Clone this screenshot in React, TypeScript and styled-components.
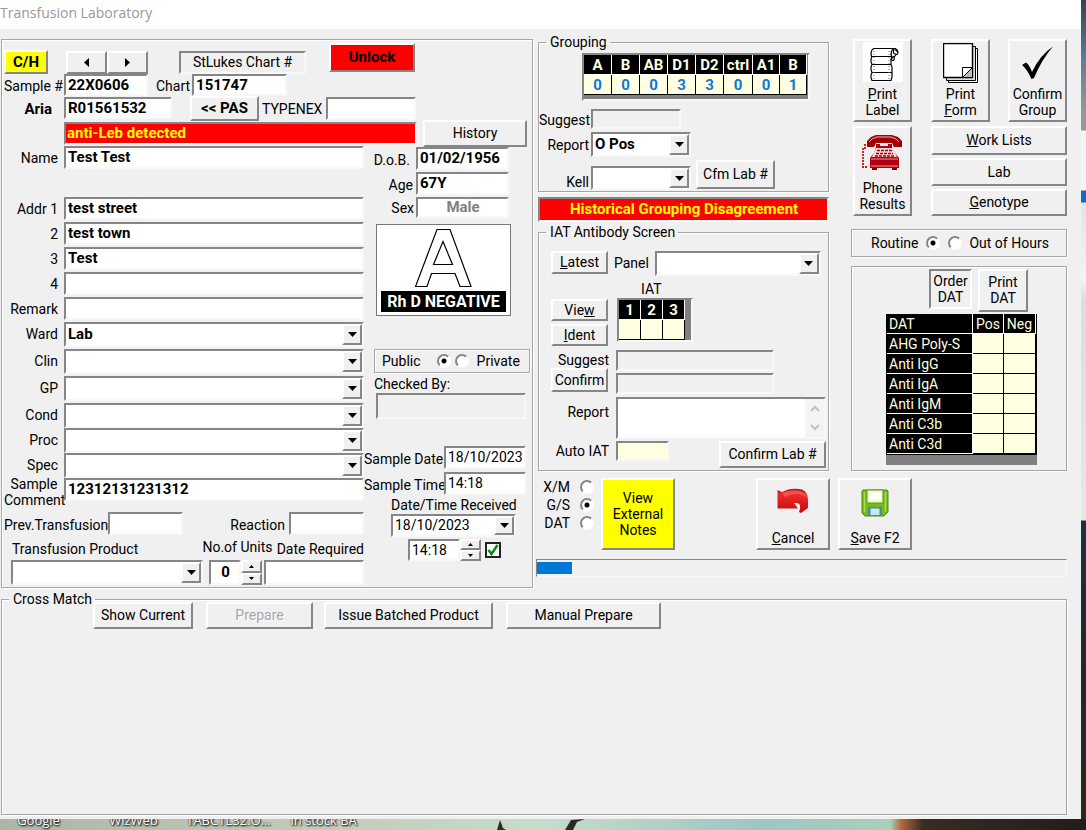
import React from "react";
import styled, { createGlobalStyle, css } from "styled-components";

const GlobalStyle = createGlobalStyle`
  *, *::before, *::after { box-sizing: border-box; }
  body {
    margin: 0;
    background: #2a2623;
    color: #000;
    font-family: Roboto, "Liberation Sans", sans-serif;
    font-size: 14px;
    line-height: 16px;
  }
  button, input, select, textarea { font: inherit; color: inherit; margin: 0; border-radius: 0; }
`;

const raised = css`
  border: 2px solid;
  border-color: #fff #868686 #868686 #fff;
  background: #f0f0f0;
`;

const sunken = css`
  border: 2px solid;
  border-color: #868686 #f8f8f8 #f8f8f8 #868686;
`;

const etched = css`
  border: 1px solid #a6a6a6;
  box-shadow: 1px 1px 0 #fff, inset 1px 1px 0 #fff;
`;

/* ---------- desktop and window ---------- */

const Desktop = styled.div`
  min-height: 100vh;
  display: flex;
  flex-direction: column;
  background: linear-gradient(
    to bottom,
    #2f4558 0, #5d7d97 60px, #8b9aa0 110px, #9a978c 130px, #f4f4f4 131px, #f4f4f4 190px,
    #0a6cd0 191px, #0a6cd0 202px, #e4e4e4 203px, #f4f4f4 280px, #dcdcdc 300px, #e8e8e8 520px,
    #16324a 521px, #22282c 640px, #2a2623 100%
  );
`;

const Window = styled.main`
  flex: 1;
  display: flex;
  flex-direction: column;
  margin-right: 5px;
  background: #f0f0f0;
`;

const TitleBar = styled.header`
  height: 29px;
  padding-top: 5px;
  background: #fff;
  color: #999;
  font-family: "Open Sans", "Noto Sans", sans-serif;
`;

const Title = styled.h1`
  margin: 0;
  font-size: 14px;
  font-weight: 400;
  line-height: 16px;
`;

const Body = styled.div`
  flex: 1;
  display: flex;
  flex-direction: column;
  padding: 10px 14px 4px 1px;
`;

const Columns = styled.div`
  display: grid;
  grid-template-columns: 532fr 531fr;
  gap: 3px;
`;

const Taskbar = styled.footer`
  height: 11px;
  overflow: hidden;
  display: flex;
  align-items: flex-end;
  justify-content: space-between;
  background: linear-gradient(
    to right,
    #aeb4a6 0, #c3ccba 30%, #c6dccb 50%, #9fc5c3 70%, #a9cfbd 82%, #b4673a 83%, #3a2b24 85%, #211d1c 100%
  );
`;

const IconNames = styled.div`
  display: flex;
  margin-left: -9px;
  padding-bottom: 2px;
`;

const IconName = styled.span`
  width: 95px;
  text-align: center;
  white-space: nowrap;
  color: #fff;
  font: 13px/16px "Open Sans", "Noto Sans", sans-serif;
  text-shadow: 1px 1px 2px #000, 0 0 2px #000;
`;

const Masts = styled.svg`
  width: 100px;
  height: 11px;
  flex: none;
  margin-left: 126px;
  margin-right: auto;
`;

/* ---------- shared controls ---------- */

const Row = styled.div<{ $h?: number; $mt?: number; $align?: string; $gap?: number }>`
  display: flex;
  align-items: ${(p) => p.$align ?? "center"};
  gap: ${(p) => p.$gap ?? 0}px;
  margin-top: ${(p) => p.$mt ?? 0}px;
  ${(p) => p.$h && `height: ${p.$h}px;`}
`;

const Stack = styled.div<{ $gap?: number }>`
  display: flex;
  flex-direction: column;
  gap: ${(p) => p.$gap ?? 0}px;
`;

const Label = styled.label<{ $w?: number; $ml?: number; $bold?: boolean }>`
  flex: none;
  ${(p) => p.$w && `width: ${p.$w}px; text-align: right;`}
  margin-left: ${(p) => p.$ml ?? 0}px;
  padding-top: 2px;
  white-space: nowrap;
  ${(p) => p.$bold && "font-weight: 700; font-size: 15px;"}
`;

const LabelText = styled.span`
  display: block;
  padding-top: 2px;
`;

const TextBox = styled.input<{ $w?: number; $ml?: number; $h?: number; $tone?: string; $bold?: boolean }>`
  ${sunken}
  ${(p) => (p.$w ? `width: ${p.$w}px; flex: none;` : "flex: 1; min-width: 0; width: 100%;")}
  height: ${(p) => p.$h ?? 23}px;
  margin-left: ${(p) => p.$ml ?? 0}px;
  padding: 0 1px 1px 2px;
  background: ${(p) => p.$tone ?? "#fff"};
  ${(p) => p.$bold && "font-weight: 700; font-size: 15px;"}
  outline: none;
`;

const SexBox = styled(TextBox)`
  text-align: center;
  color: #808080;
`;

const UnitsBox = styled(TextBox)`
  text-align: center;
`;

const Button = styled.button<{ $w?: number; $h?: number; $ml?: number }>`
  ${raised}
  ${(p) => (p.$w ? `width: ${p.$w}px; flex: none;` : "width: 100%;")}
  height: ${(p) => p.$h ?? 27}px;
  margin-left: ${(p) => p.$ml ?? 0}px;
  padding: 0 0 1px;
  white-space: nowrap;
  line-height: 16px;
  &:disabled { color: #a6a6a6; text-shadow: 1px 1px 0 #fff; }
`;

const ColorButton = styled(Button)<{ $bg: string; $bold?: boolean }>`
  background: ${(p) => p.$bg};
  ${(p) => p.$bold && "font-weight: 700; font-size: 15px;"}
`;

const UnlockButton = styled(ColorButton)`
  align-self: flex-start;
`;

const BoldButton = styled(Button)`
  font-weight: 700;
  font-size: 15px;
`;

const IconButton = styled(Button)<{ $top?: number }>`
  display: flex;
  flex-direction: column;
  align-items: center;
  justify-content: space-between;
  padding: ${(p) => p.$top ?? 2}px 0 2px;
`;

const PressedButton = styled(Button)`
  border-color: #868686 #fff #fff #868686;
`;

const ComboFrame = styled.span<{ $w?: number; $h?: number; $ml?: number }>`
  position: relative;
  display: block;
  ${(p) => (p.$w ? `width: ${p.$w}px; flex: none;` : "flex: 1; min-width: 0;")}
  height: ${(p) => p.$h ?? 25}px;
  margin-left: ${(p) => p.$ml ?? 0}px;
`;

const Select = styled.select<{ $bold?: boolean }>`
  ${sunken}
  appearance: none;
  width: 100%;
  height: 100%;
  padding: 0 22px 1px 2px;
  background: #fff;
  outline: none;
  ${(p) => p.$bold && "font-weight: 700; font-size: 15px;"}
`;

const Arrow = styled.span`
  ${raised}
  position: absolute;
  top: 2px;
  right: 2px;
  bottom: 2px;
  width: 20px;
  display: flex;
  align-items: center;
  justify-content: center;
  pointer-events: none;
`;

function Combo({ id, value = "", bold, ...frame }: {
  id: string; value?: string; bold?: boolean; $w?: number; $h?: number; $ml?: number;
}) {
  return (
    <ComboFrame {...frame}>
      <Select id={id} $bold={bold} defaultValue={value}>
        <option value={value}>{value}</option>
      </Select>
      <Arrow>
        <svg width="9" height="5"><path d="M0 0h9L4.500 5z" /></svg>
      </Arrow>
    </ComboFrame>
  );
}

const Spinner = styled.span<{ $h: number }>`
  display: flex;
  flex-direction: column;
  flex: none;
  width: 21px;
  height: ${(p) => p.$h}px;
`;

const SpinButton = styled.button`
  ${raised}
  flex: 1;
  min-height: 0;
  display: flex;
  align-items: center;
  justify-content: center;
  padding: 0;
`;

function Spin({ h, name }: { h: number; name: string }) {
  return (
    <Spinner $h={h}>
      <SpinButton aria-label={`Increase ${name}`}><svg width="5" height="3"><path d="M0 3h5L2.500 0z" /></svg></SpinButton>
      <SpinButton aria-label={`Decrease ${name}`}><svg width="5" height="3"><path d="M0 0h5L2.500 3z" /></svg></SpinButton>
    </Spinner>
  );
}

const Radio = styled.input`
  appearance: none;
  flex: none;
  width: 14px;
  height: 14px;
  border: 2px solid;
  border-color: #868686 #fff #fff #868686;
  border-radius: 50%;
  background: #fff;
  &:checked { background: radial-gradient(circle, #000 0 2px, #fff 3px); }
`;

const RadioLabel = styled.label<{ $gap: number }>`
  display: flex;
  align-items: center;
  gap: ${(p) => p.$gap}px;
  white-space: nowrap;
`;

const Text = styled.span<{ $w?: number }>`
  ${(p) => p.$w && `width: ${p.$w}px; text-align: right;`}
`;

const Group = styled.fieldset`
  ${etched}
  min-width: 0;
  margin: 0;
  padding: 0;
`;

const Legend = styled.legend`
  height: 6px;
  margin-left: 7px;
  padding: 0 3px 0 4px;
  line-height: 6px;
`;

const Box = styled.section`
  ${etched}
`;

const Alert = styled.div`
  ${sunken}
  height: 23px;
  padding-left: 1px;
  background: #f00;
  color: #ff0;
  font-size: 15px;
  font-weight: 700;
  line-height: 18px;
`;

const AntibodyAlert = styled(Alert)`
  flex: none;
  width: 353px;
  margin-left: 60px;
`;

const GroupAlert = styled(Alert)`
  height: 25px;
  margin-top: 5px;
  line-height: 20px;
  text-align: center;
`;

/* ---------- patient panel ---------- */

const PatientPanel = styled(Box)`
  padding: 3px 2px;
  height: 549px;
`;

const ChartCaption = styled.div`
  ${sunken}
  flex: none;
  width: 127px;
  height: 23px;
  margin-left: 31px;
  line-height: 18px;
  text-align: center;
`;

const PatientGrid = styled.div`
  display: grid;
  grid-template-columns: 360fr 166px;
`;

const CommentLabel = styled.label`
  flex: none;
  width: 60px;
  margin-top: -2px;
  line-height: 16px;
  text-align: center;
`;

const Captions = styled.div`
  display: flex;
  margin: 4px 0 0 8px;
  height: 20px;
  align-items: center;
  justify-content: space-between;
  white-space: nowrap;
`;

const PushedLabel = styled(Label)`
  margin-left: auto;
`;

const UnitsCaption = styled.label`
  margin-left: 60px;
  padding-bottom: 4px;
`;

const BloodCard = styled.figure`
  width: 135px;
  height: 92px;
  margin: 6px 0 0 12px;
  padding: 3px 4px;
  border: 1px solid #777;
  background: #fff;
  display: flex;
  flex-direction: column;
  align-items: center;
  justify-content: space-between;
`;

const RhBar = styled.figcaption`
  width: 100%;
  height: 21px;
  background: #000;
  color: #fff;
  font-size: 16px;
  font-weight: 700;
  line-height: 21px;
  text-align: center;
`;

const AccessBox = styled(Box)`
  display: flex;
  align-items: center;
  gap: 4px;
  height: 24px;
  margin: 33px 0 0 10px;
  padding: 0 7px;
`;

const CheckedBy = styled.div`
  margin: 3px 4px 0 12px;
  height: 43px;
  display: flex;
  flex-direction: column;
  justify-content: space-between;
`;

const CheckedLabel = styled.label`
  margin-left: -2px;
`;

const CheckedBox = styled.input`
  ${sunken}
  width: 100%;
  height: 26px;
  background: #f0f0f0;
`;

const Received = styled.div`
  width: 126px;
  margin-left: 27px;
`;

const Tick = styled.input`
  appearance: none;
  width: 16px;
  height: 16px;
  border: 2px solid #222;
  background: #fff;
`;

const TickFrame = styled.span`
  position: relative;
  display: flex;
  margin-left: 4px;
  svg { position: absolute; inset: 2px; pointer-events: none; }
`;

function LabelRow({ id, label, value, h = 25, combo }: {
  id: string; label: string; value?: string; h?: number; combo?: boolean;
}) {
  return (
    <Row $h={h} $align="flex-start">
      <Label htmlFor={id} $w={54}><LabelText>{label}</LabelText></Label>
      {combo
        ? <Combo id={id} value={value} bold $ml={6} />
        : <TextBox id={id} defaultValue={value} $bold $ml={6} />}
    </Row>
  );
}

function Patient() {
  return (
    <PatientPanel aria-label="Patient">
      <Row $h={31} $align="flex-end">
        <ColorButton $bg="#ff0" $bold $w={44} $h={24}>C/H</ColorButton>
        <Button $w={41} $h={23} $ml={18} aria-label="Previous sample"><svg width="5" height="9"><path d="M5 0v9L0 4.500z" /></svg></Button>
        <Button $w={41} $h={23} aria-label="Next sample"><svg width="5" height="9"><path d="M0 0v9l5-4.500z" /></svg></Button>
        <ChartCaption>StLukes Chart #</ChartCaption>
        <UnlockButton $bg="#f00" $bold $w={86} $h={29} $ml={23}>Unlock</UnlockButton>
      </Row>
      <Row $h={22}>
        <Label htmlFor="sample" $w={57}>Sample #</Label>
        <TextBox id="sample" $bold $w={84} $ml={3} $h={22} defaultValue="22X0606" />
        <Label htmlFor="chart" $ml={8}>Chart</Label>
        <TextBox id="chart" $bold $w={95} $ml={2} $h={22} defaultValue="151747" />
      </Row>
      <Row $h={24}>
        <Label htmlFor="aria" $w={48} $bold>Aria</Label>
        <TextBox id="aria" $bold $w={108} $ml={12} $h={22} defaultValue="R01561532" />
        <BoldButton $w={69} $h={25} $ml={18}>&lt;&lt; PAS</BoldButton>
        <Label htmlFor="typenex" $ml={3}>TYPENEX</Label>
        <TextBox id="typenex" $w={90} $ml={4} />
      </Row>
      <Row $h={26}>
        <AntibodyAlert role="alert">anti-Leb detected</AntibodyAlert>
        <Button $w={104} $ml={6}>History</Button>
      </Row>
      <PatientGrid>
        <div>
          <LabelRow id="name" label="Name" value="Test Test" h={51} />
          <LabelRow id="addr1" label="Addr 1" value="test street" />
          <LabelRow id="addr2" label="2" value="test town" />
          <LabelRow id="addr3" label="3" value="Test" />
          <LabelRow id="addr4" label="4" />
          <LabelRow id="remark" label="Remark" />
          <LabelRow id="ward" label="Ward" value="Lab" h={27} combo />
          <LabelRow id="clin" label="Clin" h={27} combo />
          <LabelRow id="gp" label="GP" h={27} combo />
          <LabelRow id="cond" label="Cond" combo />
          <LabelRow id="proc" label="Proc" combo />
          <LabelRow id="spec" label="Spec" combo />
          <Row $h={32} $align="flex-start">
            <CommentLabel htmlFor="comment">Sample Comment</CommentLabel>
            <TextBox id="comment" $bold defaultValue="12312131231312" />
          </Row>
          <Row $mt={2} $h={23}>
            <Label htmlFor="prev">Prev.Transfusion</Label>
            <TextBox id="prev" $w={75} />
            <PushedLabel htmlFor="reaction">Reaction</PushedLabel>
            <TextBox id="reaction" $w={75} $ml={4} />
          </Row>
          <Captions>
            <label htmlFor="product">Transfusion Product</label>
            <UnitsCaption htmlFor="units">No.of Units</UnitsCaption>
            <label htmlFor="required">Date Required</label>
          </Captions>
          <Row $mt={1} $h={25}>
            <Combo id="product" $w={192} $ml={7} />
            <UnitsBox id="units" $bold $w={32} $ml={6} $h={25} defaultValue="0" />
            <Spin h={25} name="units" />
            <TextBox id="required" $ml={2} $h={25} />
          </Row>
        </div>
        <div>
          <Row $h={25}>
            <Label htmlFor="dob" $w={46}>D.o.B.</Label>
            <TextBox id="dob" $bold $w={93} $ml={6} defaultValue="01/02/1956" />
          </Row>
          <Row $h={25}>
            <Label htmlFor="age" $w={49}>Age</Label>
            <TextBox id="age" $bold $w={93} $ml={3} defaultValue="67Y" />
          </Row>
          <Row $h={22}>
            <Label htmlFor="sex" $w={50}>Sex</Label>
            <SexBox id="sex" $bold $w={93} $ml={2} $h={21} defaultValue="Male" />
          </Row>
          <BloodCard>
            <svg width="58" height="60" viewBox="0 0 58 60" role="img" aria-label="Blood group A">
              <path d="M.5 58.500 22 1.500H35L56 58.500H45L40 45.500H16.500L12 58.500zM18.500 36.500H37.500L28 13.500z" fill="#fff" stroke="#000" strokeWidth="1.200" />
            </svg>
            <RhBar>Rh D NEGATIVE</RhBar>
          </BloodCard>
          <AccessBox>
            <RadioLabel $gap={16}><Text>Public</Text><Radio type="radio" name="access" defaultChecked /></RadioLabel>
            <RadioLabel $gap={8}><Radio type="radio" name="access" /><Text>Private</Text></RadioLabel>
          </AccessBox>
          <CheckedBy>
            <CheckedLabel htmlFor="checked">Checked By:</CheckedLabel>
            <CheckedBox id="checked" />
          </CheckedBy>
          <Row $mt={27} $h={23}>
            <Label htmlFor="sdate" $w={79}>Sample Date</Label>
            <TextBox id="sdate" $w={82} $ml={1} defaultValue="18/10/2023" />
          </Row>
          <Row $mt={3} $h={23}>
            <Label htmlFor="stime" $w={79}>Sample Time</Label>
            <TextBox id="stime" $w={82} $ml={1} defaultValue="14:18" />
          </Row>
          <Received>
            <Row $mt={1} $h={17}><label htmlFor="rdate">Date/Time Received</label></Row>
            <Row $h={25}><Combo id="rdate" value="18/10/2023" $w={125} $h={23} /></Row>
            <Row $h={24}>
              <TextBox id="rtime" aria-label="Time received" $w={52} $h={22} $ml={17} defaultValue="14:18" />
              <Spin h={22} name="time received" />
              <TickFrame>
                <Tick type="checkbox" defaultChecked aria-label="Received" />
                <svg width="12" height="12" viewBox="0 0 12 12"><path d="M1.500 6 4.500 10 10.500 1" fill="none" stroke="#0a8a0a" strokeWidth="2.500" /></svg>
              </TickFrame>
            </Row>
          </Received>
        </div>
      </PatientGrid>
    </PatientPanel>
  );
}

/* ---------- grouping and antibody screen ---------- */

const GridFrame = styled.div<{ $w: number }>`
  ${sunken}
  width: ${(p) => p.$w}px;
  background: #808080;
`;

const GroupingFrame = styled(GridFrame)`
  margin: 8px 0 0 43px;
  padding-bottom: 4px;
`;

const DatFrame = styled.div`
  width: 151px;
  margin-top: 2px;
  padding-bottom: 10px;
  background: #808080;
`;

const Grid = styled.table`
  border-collapse: separate;
  border-spacing: 0;
  table-layout: fixed;
  th, td {
    height: 20px;
    padding: 0;
    text-align: center;
    line-height: 18px;
    font-size: 15px;
    font-weight: 700;
  }
  th {
    background: #000;
    color: #ffffe1;
    border-right: 1px solid #fff;
    border-bottom: 1px solid #fff;
  }
  td {
    background: #ffffe1;
    color: #0a78d7;
    border-right: 1px solid #000;
    border-bottom: 1px solid #000;
  }
`;

const DatGrid = styled(Grid)`
  width: 100%;
  border: 1px solid #000;
  border-top: 0;
  th, td { font-weight: 400; font-size: 14px; }
  th:first-child { text-align: left; padding-left: 2px; }
`;

const GroupingSet = styled(Group)`
  height: 153px;
`;

const CfmButton = styled(Button)`
  align-self: flex-start;
`;

const reactions = [["A", 0], ["B", 0], ["AB", 0], ["D1", 3], ["D2", 3], ["ctrl", 0], ["A1", 0], ["B", 1]];

function Grouping() {
  return (
    <GroupingSet>
      <Legend>Grouping</Legend>
      <GroupingFrame $w={228}>
        <Grid>
          <colgroup>{reactions.map((_, i) => <col key={i} width={i < 5 ? 28 : i === 5 ? 29 : 27} />)}</colgroup>
          <thead><tr>{reactions.map(([name], i) => <th key={i}>{name}</th>)}</tr></thead>
          <tbody><tr>{reactions.map(([, score], i) => <td key={i}>{score}</td>)}</tr></tbody>
        </Grid>
      </GroupingFrame>
      <Row $mt={8} $h={20}>
        <Label htmlFor="gsuggest" $w={50}>Suggest</Label>
        <TextBox id="gsuggest" $w={90} $h={20} $ml={2} $tone="#f0f0f0" />
      </Row>
      <Row $mt={3} $h={24}>
        <Label htmlFor="greport" $w={50}>Report</Label>
        <Combo id="greport" value="O Pos" bold $w={100} $ml={2} />
      </Row>
      <Row $mt={4} $h={30} $align="flex-end">
        <Label htmlFor="kell" $w={50}>Kell</Label>
        <Combo id="kell" $w={100} $h={24} $ml={2} />
        <CfmButton $w={79} $h={29} $ml={5}>Cfm Lab #</CfmButton>
      </Row>
    </GroupingSet>
  );
}

const ScreenSet = styled(Group)`
  height: 242px;
  margin-top: 7px;
`;

const ScreenBody = styled.div`
  padding: 16px 2px 0 12px;
`;

const IatColumn = styled.div`
  margin-left: 9px;
`;

const IatTitle = styled.div`
  height: 17px;
  padding-left: 24px;
`;

const IatButtons = styled(Stack)`
  width: 57px;
  padding-top: 18px;
`;

const SuggestStack = styled(Stack)`
  width: 58px;
  text-align: right;
`;

const ReportLabel = styled.span`
  display: block;
  padding-bottom: 14px;
`;

const ReportArea = styled.div`
  ${sunken}
  flex: 1;
  height: 42px;
  margin-left: 7px;
  display: flex;
  background: #fff;
`;

const ReportText = styled.textarea`
  flex: 1;
  min-width: 0;
  border: 0;
  padding: 2px;
  resize: none;
  outline: none;
  background: none;
`;

const ScrollRail = styled.span`
  width: 19px;
  display: flex;
  flex-direction: column;
  align-items: center;
  justify-content: space-around;
  background: #f4f4f4;
`;

const PushedButton = styled(Button)`
  margin-left: auto;
`;

function Screen() {
  return (
    <ScreenSet>
      <Legend>IAT Antibody Screen</Legend>
      <ScreenBody>
        <Row $h={25} $align="flex-start">
          <Button $w={57} $h={23}><u>L</u>atest</Button>
          <Label htmlFor="panel" $ml={6}><LabelText>Panel</LabelText></Label>
          <Combo id="panel" $w={166} $ml={6} />
        </Row>
        <Row $mt={5} $align="flex-start">
          <IatButtons $gap={3}>
            <Button $h={22}>Vie<u>w</u></Button>
            <Button $h={22}><u>I</u>dent</Button>
          </IatButtons>
          <IatColumn>
            <IatTitle>IAT</IatTitle>
            <GridFrame $w={76}>
              <Grid>
                <colgroup><col width={22} /><col width={22} /><col width={22} /></colgroup>
                <thead><tr><th>1</th><th>2</th><th>3</th></tr></thead>
                <tbody><tr><td /><td /><td /></tr></tbody>
              </Grid>
            </GridFrame>
          </IatColumn>
        </Row>
        <Row $mt={4} $align="flex-start">
          <SuggestStack>
            <Label htmlFor="iatsuggest">Suggest</Label>
            <Button $w={57} $h={24}>Confirm</Button>
          </SuggestStack>
          <Stack $gap={2}>
            <TextBox id="iatsuggest" $w={158} $h={21} $ml={7} $tone="#f0f0f0" />
            <TextBox aria-label="Confirmed antibody" $w={158} $h={21} $ml={7} $tone="#f0f0f0" />
          </Stack>
        </Row>
        <Row $mt={2} $h={43}>
          <Label htmlFor="iatreport" $w={58}><ReportLabel>Report</ReportLabel></Label>
          <ReportArea>
            <ReportText id="iatreport" />
            <ScrollRail>
              <svg width="10" height="7"><path d="M1 6 5 2l4 4" fill="none" stroke="#c0c0c0" strokeWidth="2" /></svg>
              <svg width="10" height="7"><path d="m1 1 4 4 4-4" fill="none" stroke="#c0c0c0" strokeWidth="2" /></svg>
            </ScrollRail>
          </ReportArea>
        </Row>
        <Row $mt={2} $h={26} $align="flex-start">
          <Label htmlFor="autoiat" $w={58}>Auto IAT</Label>
          <TextBox id="autoiat" $w={53} $h={20} $ml={7} $tone="#ffffe1" />
          <PushedButton $w={107}>Confirm Lab #</PushedButton>
        </Row>
      </ScreenBody>
    </ScreenSet>
  );
}

/* ---------- right-hand tools ---------- */

const Upper = styled.div`
  display: grid;
  grid-template-columns: 291fr 216fr;
  gap: 22px;
  padding-left: 2px;
`;

const Tools = styled.div`
  display: flex;
  flex-direction: column;
`;

const ToolGrid = styled.div`
  display: grid;
  grid-template-columns: 59px 1fr;
  gap: 4px 19px;
  margin-left: 2px;
`;

const SpreadRow = styled.div`
  display: flex;
  justify-content: space-between;
`;

const HoursBox = styled(Box)`
  display: flex;
  align-items: center;
  gap: 8px;
  height: 28px;
  margin-top: 13px;
  padding-left: 19px;
`;

const DatBox = styled(Box)`
  height: 205px;
  margin-top: 9px;
  padding: 2px 0 0 34px;
`;

const LabelRollIcon = () => (
  <svg width="40" height="40" viewBox="0 0 40 40">
    <path d="M0 0h40v40H0z" fill="#fff" />
    <g fill="#fff" stroke="#000" strokeWidth="1.200">
      <path d="M10 6.500H32Q36 8 34.500 12 31 13 31 18 29 20 28 15.500V11z" />
      <path d="M11 6.500Q7 8 8.500 14.500H28.500Q27 9 31 6.500z" />
      <path d="M9 14.500H29L28 17V22.500H9L8 20V17zM9 22.500H28L29 25V30.500H9L8 28V25zM9 30.500H29V35L28 38.500H9L8 36V33z" />
      <path d="M31 7Q29 12 33 12M32 7.500 35 10M29 16.500 31 14" fill="none" />
    </g>
    <path d="M11 9v29M26 9v29" stroke="#777" strokeDasharray="1 2" />
  </svg>
);

const FormIcon = () => (
  <svg width="36" height="41" viewBox="0 0 36 41">
    <g fill="#fff" stroke="#000">
      <path d="M5.500 5.500h29v34h-29z" />
      <path d="M3.500 3.500h29v34h-29z" fill="#ddd" />
      <path d="M.5.500h29v34H.5z" strokeWidth="1.400" />
      <path d="M19.500 34.500v-10h10z" />
      <path d="M19.500 34.500 29.500 24.500v10z" fill="#bbb" />
    </g>
  </svg>
);

const CheckIcon = () => (
  <svg width="33" height="34" viewBox="0 0 33 34">
    <path d="M1 19 5 16.500Q8.500 19 11 26 19 9 32 .5 21 13 13 32L10.500 33Q6 23 1 19z" />
  </svg>
);

const PhoneIcon = () => (
  <svg width="42" height="35" viewBox="0 0 42 35">
    <path d="M7 10H3v3h-2v19h4" fill="none" stroke="#c01818" strokeWidth="1.800" strokeDasharray="2 1" />
    <path d="M5 12V6l4-4 5-2h16l6 2 4 4v6h-8l-2-4H14l-2 4z" fill="#a00008" />
    <path d="M7 7l3-3 5-2h14l5 2 3 3" fill="none" stroke="#ffb0b0" />
    <path d="M14 12V9h4v2h8V9h4v3l3 6 4 5v10H8V23l4-5z" fill="#b00010" />
    <path d="M14 13h17l4 9H10z" fill="#ffd8d8" />
    <path d="M15 15.500h15M14 18.500h17M13 21h19" stroke="#a00008" strokeWidth="1.600" strokeDasharray="3 1" />
    <path d="M9 24h27M9 31h27" stroke="#ff8a8a" />
    <path d="M10 33h5v2h-5zM30 33h5v2h-5z" fill="#700" />
  </svg>
);

const UndoIcon = () => (
  <svg width="32" height="27" viewBox="0 0 32 27">
    <defs>
      <linearGradient id="undo" x1="0" y1="0" x2="0" y2="1">
        <stop offset="0" stopColor="#b51212" /><stop offset=".25" stopColor="#f02a2a" /><stop offset="1" stopColor="#c20a0a" />
      </linearGradient>
    </defs>
    <path d="M.5 2 5 4Q14-1 25 1.500 31 4 31 12V20L24 25 22 24Q25 16 20 15H17L21 20.500H.5z" fill="url(#undo)" />
    <path d="M5 5Q14 1 23 3 29 5 30 10 26 6 20 6 13 6 8 9z" fill="#ff7070" opacity=".6" />
  </svg>
);

const DiskIcon = () => (
  <svg width="28" height="28" viewBox="0 0 28 28">
    <path d="M2 1h24l1 1v21l-4 4H4l-3-3V2z" fill="#78b81c" stroke="#4d8a10" />
    <path d="M3.500 3v20M24.500 3v20" stroke="#a8dc50" strokeWidth="1.500" />
    <path d="M6 1h16v13H6z" fill="#eef8d0" stroke="#5f9a14" />
    <path d="M8 3h12v8H8z" fill="#fcfff0" />
    <path d="M7 18h14v9H7z" fill="#458e9c" />
    <path d="M9.500 19.500h9v6.500h-9z" fill="#c4e8f4" />
  </svg>
);

const datRows = ["AHG Poly-S", "Anti IgG", "Anti IgA", "Anti IgM", "Anti C3b", "Anti C3d"];

function ToolColumn() {
  return (
    <Tools>
      <ToolGrid>
        <IconButton $h={83} $top={1}><LabelRollIcon /><span><u>P</u>rint<br />Label</span></IconButton>
        <SpreadRow>
          <IconButton $w={59} $h={83}><FormIcon /><span>Print<br /><u>F</u>orm</span></IconButton>
          <IconButton $w={59} $h={83} $top={5}><CheckIcon /><span>Confirm<br />Group</span></IconButton>
        </SpreadRow>
        <IconButton $h={90} $top={7}><PhoneIcon /><span>Phone<br />Results</span></IconButton>
        <Stack $gap={3}>
          <Button $h={29}><u>W</u>ork Lists</Button>
          <Button $h={28}>Lab</Button>
          <Button $h={27}><u>G</u>enotype</Button>
        </Stack>
      </ToolGrid>
      <HoursBox>
        <RadioLabel $gap={8}><Text>Routine</Text><Radio type="radio" name="hours" defaultChecked /></RadioLabel>
        <RadioLabel $gap={7}><Radio type="radio" name="hours" /><Text>Out of Hours</Text></RadioLabel>
      </HoursBox>
      <DatBox aria-label="DAT">
        <Row $align="flex-start" $gap={6}>
          <PressedButton $w={43} $h={40} $ml={43}>Order<br />DAT</PressedButton>
          <Button $w={50} $h={43}>Print<br />DAT</Button>
        </Row>
        <DatFrame>
          <DatGrid>
            <colgroup><col width={86} /><col width={31} /><col width={32} /></colgroup>
            <thead><tr><th scope="col">DAT</th><th scope="col">Pos</th><th scope="col">Neg</th></tr></thead>
            <tbody>
              {datRows.map((name) => <tr key={name}><th scope="row">{name}</th><td /><td /></tr>)}
            </tbody>
          </DatGrid>
        </DatFrame>
      </DatBox>
    </Tools>
  );
}

/* ---------- actions, progress, cross match ---------- */

const Actions = styled.div`
  display: flex;
  height: 72px;
  margin-top: 7px;
`;

const TypeList = styled.div`
  width: 58px;
  margin-right: 7px;
`;

const TypeRow = styled(RadioLabel)`
  height: 18px;
`;

const ProgressTrack = styled.div`
  ${sunken}
  border-width: 1px;
  height: 18px;
  margin-top: 9px;
  padding: 2px 0;
`;

const ProgressFill = styled.div`
  height: 12px;
  background: #0078d7;
`;

const CrossMatchSet = styled(Group)`
  flex: 1;
  min-height: 100px;
  margin-top: 8px;
`;

const CrossButtons = styled.div`
  display: flex;
  padding-left: 91px;
`;

export default function App() {
  const progress = 6.7;
  return (
    <Desktop>
      <GlobalStyle />
      <Window>
        <TitleBar><Title>Transfusion Laboratory</Title></TitleBar>
        <Body>
          <Columns>
            <Patient />
            <div>
              <Upper>
                <div>
                  <Grouping />
                  <GroupAlert role="alert">Historical Grouping Disagreement</GroupAlert>
                  <Screen />
                </div>
                <ToolColumn />
              </Upper>
              <Actions>
                <TypeList>
                  {["X/M", "G/S", "DAT"].map((type) => (
                    <TypeRow key={type} $gap={10}>
                      <Text $w={34}>{type}</Text>
                      <Radio type="radio" name="type" defaultChecked={type === "G/S"} />
                    </TypeRow>
                  ))}
                </TypeList>
                <ColorButton $bg="#ff0" $w={74} $h={72}>View<br />External<br />Notes</ColorButton>
                <IconButton $w={74} $h={72} $ml={81} $top={8}><UndoIcon /><span><u>C</u>ancel</span></IconButton>
                <IconButton $w={74} $h={72} $ml={8} $top={9}><DiskIcon /><span><u>S</u>ave F2</span></IconButton>
              </Actions>
              <ProgressTrack role="progressbar" aria-valuenow={progress}>
                <ProgressFill style={{ width: `${progress}%` }} />
              </ProgressTrack>
            </div>
          </Columns>
          <CrossMatchSet>
            <Legend>Cross Match</Legend>
            <CrossButtons>
              <Button $w={100}>Show Current</Button>
              <Button $w={107} $ml={13} disabled>Prepare</Button>
              <Button $w={169} $ml={11}>Issue Batched Product</Button>
              <Button $w={155} $ml={13}>Manual Prepare</Button>
            </CrossButtons>
          </CrossMatchSet>
        </Body>
      </Window>
      <Taskbar>
        <IconNames>
          <IconName>Google</IconName>
          <IconName>WizWeb</IconName>
          <IconName>TABCTL32.O...</IconName>
          <IconName>In stock BA</IconName>
        </IconNames>
        <Masts viewBox="0 0 100 11"><path d="M0 11 3 1l3 8 3 2zM68 11 74 1l14-1-8 3-4 8z" fill="#2c2a22" /></Masts>
      </Taskbar>
    </Desktop>
  );
}
